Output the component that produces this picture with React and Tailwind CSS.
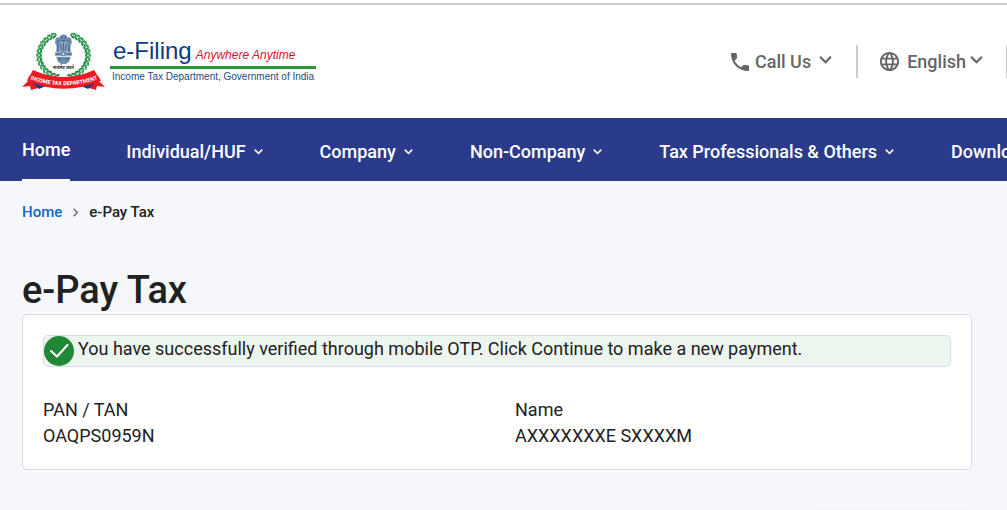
import { MdLanguage } from 'react-icons/md';

const navItems = ['Individual/HUF', 'Company', 'Non-Company', 'Tax Professionals & Others', 'Downloads'];

// Leaf positions for one half of the laurel wreath, from the bottom to the top
const leafAngles = [104, 115, 126, 137, 148, 159, 170, 181, 192, 203, 214, 225, 236, 246];

const Chevron = ({ className }) => (
  <svg viewBox="0 0 12 12" className={className} fill="none" stroke="currentColor" aria-hidden="true">
    <path d="M1 3.5l5 5 5-5" />
  </svg>
);

const PhoneIcon = ({ className }) => (
  <svg viewBox="0 0 24 24" className={className} fill="currentColor" aria-hidden="true">
    <path d="M21 15.460l-5.270-.61-2.520 2.520c-2.830-1.440-5.150-3.750-6.590-6.590l2.530-2.530L8.540 3H3.030C2.450 13.180 10.820 21.550 21 20.970v-5.510z" />
  </svg>
);

const HalfWreath = () => (
  <g>
    {leafAngles.map((angle, i) => {
      const rad = (angle * Math.PI) / 180;
      const x = 41.5 + 24.5 * Math.cos(rad);
      const y = 23.5 + 22 * Math.sin(rad);
      return (
        <g key={angle} transform={`translate(${x} ${y}) rotate(${angle + 90})`}>
          <ellipse cx="0" cy="-1.5" rx="2.8" ry="1.2" transform="rotate(28)" fill="#36a05a" />
          <ellipse cx="0" cy="1.5" rx="2.8" ry="1.2" transform="rotate(-28)" fill="#1f8f4a" />
          <circle cx="1" cy="0" r="0.7" fill={i % 2 ? '#b7dfb9' : '#e4c9a0'} />
        </g>
      );
    })}
  </g>
);

const Emblem = () => (
  <svg viewBox="0 0 84 58" className="w-[84px] h-[58px] shrink-0" role="img" aria-label="Income Tax Department">
    <HalfWreath />
    <g transform="translate(83 0) scale(-1 1)">
      <HalfWreath />
    </g>

    {/* Lion capital */}
    <g transform="translate(-5 -1.500) scale(1.120)">
      <g fill="#6f8cae">
        <path d="M38.5 5c1-2 5-2 6 0l1 3-1 3h-6l-1-3z" />
        <path d="M34.5 7.500c1-2 3-2 4-.5l.5 4-1 8h-3l.5-5-1.500-3z" />
        <path d="M48.500 7.500c-1-2-3-2-4-.5l-.5 4 1 8h3l-.5-5 1.500-3z" />
        <path d="M38 10h7l.5 9.500h-8z" fill="#8da5c1" />
        <path d="M34 19.500h15v3H34z" />
        <path d="M35 23.500h13l-1.500 4.500-3 2h-4l-3-2z" />
      </g>
      <g fill="none" stroke="#33557f" strokeWidth="0.7">
        <path d="M39 6.500h1.500M42.500 6.500H44M40 9h3M36 9.500h2M45 9.500h2M39 12l1 6M44 12l-1 6M41.500 11v7" />
        <path d="M36.500 13v6M46.500 13v6M35 21h3M45 21h3M37 25.500h3M43 25.500h3" />
        <circle cx="41.500" cy="21" r="1.500" fill="#e8eef5" />
      </g>
    </g>
    <text x="41.5" y="36.500" textAnchor="middle" fill="#222" fontSize="4" fontWeight="700" fontFamily="'Noto Sans', 'Liberation Sans', sans-serif">
      सत्यमेव जयते
    </text>

    {/* Ribbon */}
    <path d="M7 44l-1 5-6 6 8-1 1 4 14-4-2-6z" fill="#e01b24" />
    <path d="M76 44l1 5 6 6-8-1-1 4-14-4 2-6z" fill="#e01b24" />
    <path d="M9 49l15 5-7 3z" fill="#1d3c7c" />
    <path d="M75 49l-16 5 7 3z" fill="#1d3c7c" />
    <path d="M11 38Q41.500 52 72 38L79 48.500Q41.500 65 5 48.500z" fill="#ed1c24" />
    <path id="ribbon" d="M5 46Q41.500 60.500 79 46" fill="none" />
    <text fill="#fff" fontSize="5.5" fontWeight="700" fontFamily="Roboto, sans-serif">
      <textPath href="#ribbon" startOffset="50%" textAnchor="middle">INCOME TAX DEPARTMENT</textPath>
    </text>
  </svg>
);

const Logo = () => (
  <a href="#home" className="flex shrink-0 items-start gap-1">
    <Emblem />
    <div className="mt-1 whitespace-nowrap font-['Liberation_Sans',sans-serif]">
      <div className="flex items-baseline gap-1 border-b-3 border-[#2a9438] px-[3px]">
        <span className="text-2xl leading-[30px] text-[#0b3b80]">e-Filing</span>
        <span className="text-xs leading-4 italic text-[#e0122f]">Anywhere Anytime</span>
      </div>
      <div className="px-0.5 text-[10px] leading-4 text-[#175080]">Income Tax Department, Government of India</div>
    </div>
  </a>
);

const Header = () => (
  <header className="flex h-[115px] items-start justify-between border-t-2 border-[#ccc] bg-white pl-[22px] pt-[27px]">
    <Logo />
    <div className="mt-[13px] flex h-[33px] text-lg font-medium text-[#666]">
      <button className="flex items-center border-r-2 border-[#ccc] pr-6">
        <PhoneIcon className="mr-[3px] size-6" />
        Call Us
        <Chevron className="mb-1 ml-2 size-[13px] stroke-2" />
      </button>
      <button className="flex items-center border-r border-[#ccc] pl-5 pr-[23px]">
        <MdLanguage className="mr-1.5 size-[23px]" />
        English
        <Chevron className="mb-1 ml-1 size-[13px] stroke-2" />
      </button>
    </div>
  </header>
);

const Nav = () => (
  <nav className="flex h-[63px] gap-14 overflow-hidden whitespace-nowrap bg-[#2a3b8c] pl-[22px] text-lg font-medium text-white">
    <a href="#home" className="flex items-center border-b-2 border-white pt-0.5">Home</a>
    {navItems.map((item) => (
      <button key={item} className="flex shrink-0 items-center gap-2 pr-px pt-1">
        {item}
        <Chevron className="size-[9px] stroke-2" />
      </button>
    ))}
  </nav>
);

const Field = ({ label, value }) => (
  <div className="flex-1">
    <dt>{label}</dt>
    <dd>{value}</dd>
  </div>
);

export default function App() {
  return (
    <div className="h-screen overflow-hidden bg-[#f5f7fb] font-[Roboto,sans-serif] text-[#212121]">
      <div className="pt-[3px] bg-white">
        <Header />
      </div>
      <Nav />
      <main className="pl-[22px] pr-[35px] pt-5">
        <div className="flex items-center text-[15px] font-medium leading-[22px]">
          <a href="#home" className="text-[#0f67ca]">Home</a>
          <Chevron className="mx-[9px] size-[9px] -rotate-90 stroke-[1.5] text-[#555]" />
          <span>e-Pay Tax</span>
        </div>
        <h1 className="mt-11 text-[38px] font-medium leading-[47px]">e-Pay Tax</h1>
        <section className="rounded-[5px] border border-[#d9dbea] bg-white p-5">
          <div role="status" className="flex h-8 items-center rounded-[5px] border border-[#d9dbea] bg-[#edf6ee]">
            <svg viewBox="0 0 30 30" className="mr-1 size-[30px] shrink-0" aria-hidden="true">
              <circle cx="15" cy="15" r="15" fill="#218838" />
              <path d="M7 15l6 5.500L23.500 9" fill="none" stroke="#fff" strokeWidth="2" strokeLinecap="round" />
            </svg>
            <p className="pb-1 text-lg">You have successfully verified through mobile OTP. Click Continue to make a new payment.</p>
          </div>
          <dl className="mt-[30px] flex gap-9 text-lg leading-[26px]">
            <Field label="PAN / TAN" value="OAQPS0959N" />
            <Field label="Name" value="AXXXXXXXE SXXXXM" />
          </dl>
        </section>
        <div className="ml-auto mt-10 h-12 w-[162px] rounded bg-white shadow" />
      </main>
    </div>
  );
}
